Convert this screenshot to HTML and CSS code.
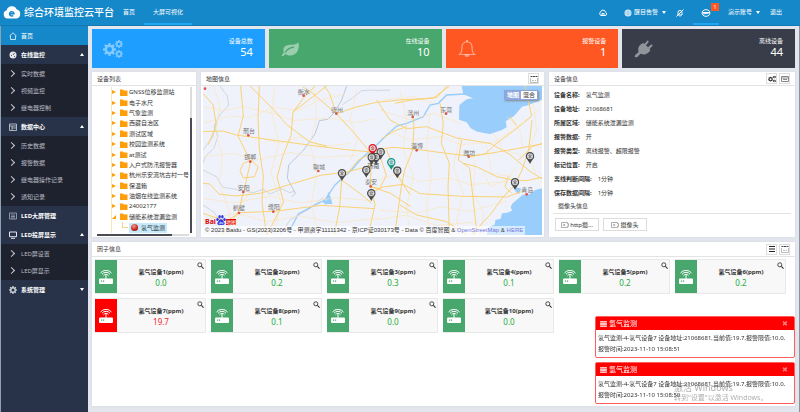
FILE: index.html
```html
<!DOCTYPE html>
<html lang="zh-CN">
<head>
    <meta charset="UTF-8">
    <title>综合环境监控云平台</title>
    <link rel="stylesheet" href="styles.css">
</head>
<body>

    <!-- Shared icons -->
    <svg class="defs" aria-hidden="true">
        <symbol id="gear" viewBox="0 0 16 16">
            <path fill-rule="evenodd" d="M6.8 0h2.4l.4 2.2 1.3.6L12.800 1.500l1.700 1.700-1.300 1.900.6 1.300 2.200.4v2.400l-2.200.4-.6 1.300 1.300 1.900-1.700 1.700-1.900-1.300-1.300.6-.4 2.200H6.800l-.4-2.200-1.300-.6-1.900 1.300-1.700-1.700 1.300-1.900-.6-1.300L0 9.200V6.800l2.200-.4.6-1.300-1.300-1.900 1.700-1.700 1.900 1.300 1.300-.6zM8 5a3 3 0 1 0 0 6 3 3 0 0 0 0-6z"/>
        </symbol>
        <symbol id="gears" viewBox="0 0 20 18">
            <use href="#gear" x="0" y="3" width="13" height="13"/>
            <use href="#gear" x="12" y="0" width="8" height="8"/>
            <use href="#gear" x="12" y="10" width="8" height="8"/>
        </symbol>
        <symbol id="folder" viewBox="0 0 8 7">
            <path d="M0 .5h3l.8 1H7.500V7H0z"/>
        </symbol>
        <symbol id="router" viewBox="0 0 14 14">
            <rect x="0" y="8.500" width="14" height="5.500" rx="1"/>
            <path d="M6.500 5h1v4h-1z"/>
            <g fill="none" stroke="#fff">
                <path d="M4.500 5.700a3 3 0 0 1 5 0"/>
                <path d="M3 4.300a5 5 0 0 1 8 0"/>
                <path d="M1.500 3a7 7 0 0 1 11 0"/>
            </g>
            <path class="leds" d="M2 10.500h1.200v1.200H2zM4 10.500h1.200v1.200H4z"/>
        </symbol>
        <symbol id="search" viewBox="0 0 8 8">
            <path d="M5 5l2.500 2.500" fill="none" stroke="#333" stroke-width="1.200"/>
            <circle cx="3.200" cy="3.200" r="2.300" fill="none" stroke="#333"/>
        </symbol>
        <symbol id="grid" viewBox="0 0 8 8">
            <path d="M.5 1.500h7" fill="none" stroke="#444" stroke-dasharray="2 .5"/>
            <path d="M.5 3v4.500h7V3M2 5.500h2M5 5.500h1" fill="none" stroke="#bbb"/>
        </symbol>
        <symbol id="camera" viewBox="0 0 8 8">
            <path d="M.5 1.500h6v1.500l1-.5v3l-1-.5v1.500h-6z" fill="none" stroke="#999" stroke-width=".8"/>
            <path d="M2.500 2.800l2 1.200-2 1.200z" fill="#888"/>
        </symbol>
        <symbol id="pin" viewBox="0 0 26 36">
            <path d="M13 0a13 13 0 0 1 13 13c0 7-8 12-13 23C8 25 0 20 0 13A13 13 0 0 1 13 0z"/>
            <circle cx="13" cy="13" r="9" fill="#d8d8d8"/>
            <path d="M8 11a7 7 0 0 1 10 0M10 14a4 4 0 0 1 6 0M9 17h8" fill="none" stroke="currentColor" stroke-width="2"/>
        </symbol>
    </svg>

    <header class="topbar">
        <svg class="logo" viewBox="0 0 18 13">
            <path fill="#fff" d="M4.500 12.500a4.200 4.200 0 0 1-.8-8.200 5.300 5.300 0 0 1 10-.8 4.600 4.600 0 0 1-.2 9z"/>
            <path fill="none" stroke="#1588c9" stroke-width="1.500" d="M6.800 7.700h4.200a2.200 2.200 0 1 0-.7 1.800"/>
        </svg>
        <h1>综合环境监控云平台</h1>
        <nav>
            <a href="#">首页</a>
            <a href="#" class="active">大屏可视化</a>
        </nav>
        <nav class="tools">
            <a href="#" class="tool" aria-label="云">
                <svg viewBox="0 0 8 8"><path d="M2 6.500a2 2 0 0 1-.4-3.500 2.500 2.500 0 0 1 4.900.2A1.700 1.700 0 0 1 6 6.500zM3 6V4.500h2V6" fill="none" stroke="#fff"/></svg>
            </a>
            <a href="#" class="tool alert">
                <svg viewBox="0 0 8 8"><circle cx="4" cy="4" r="3.500" fill="#d5ebf8"/><path d="M1 3h6M1 5h6M4 1v6" stroke="#6cb3dd" stroke-width=".5"/></svg>
                醒目告警<i class="caret down"></i>
            </a>
            <a href="#" class="tool mute" aria-label="静音">
                <svg viewBox="0 0 8 8"><path d="M2 6V3.500a2 2 0 0 1 4 0V6H1.500M3.500 7.200h1M7.500.5l-7 7" fill="none" stroke="#fff"/></svg>
            </a>
            <a href="#" class="tool message active" aria-label="消息">
                <svg viewBox="0 0 10 8"><path d="M5 .7c5.200 0 5.200 6.600 0 6.600S-.2.700 5 .7zM1.500 3.500h7M2 5l6-1" fill="none" stroke="#fff"/></svg>
                <span class="badge">1</span>
            </a>
            <a href="#" class="tool account">演示账号<i class="caret down"></i></a>
            <a href="#" class="tool">退出</a>
        </nav>
    </header>

    <div class="layout">
        <aside class="sidebar">
            <a href="#" class="item current">
                <svg viewBox="0 0 8 8"><path d="M.5 4L4 .8 7.500 4M1.500 3.500v4h5v-4" fill="none" stroke="#bfe0f3"/></svg>首页
            </a>
            <a href="#" class="item">
                <svg viewBox="0 0 8 8"><circle cx="4" cy="4" r="3.500" fill="#e4e6ea"/><path d="M4 4l1.500-2M2 4.500h1M5 5.500h1" stroke="#666"/></svg>在线监控<i class="caret up"></i>
            </a>
            <div class="submenu">
                <a href="#">实时数据</a>
                <a href="#">视频监控</a>
                <a href="#">继电器控制</a>
            </div>
            <a href="#" class="item">
                <svg viewBox="0 0 8 8"><path d="M.5 1h7v6.500h-7zM.5 3h7M3 5h4.500M3 3v4" fill="none" stroke="#d0d3da" stroke-width=".8"/></svg>数据中心<i class="caret up"></i>
            </a>
            <div class="submenu">
                <a href="#">历史数据</a>
                <a href="#">报警数据</a>
                <a href="#">继电器操作记录</a>
                <a href="#">通知记录</a>
            </div>
            <a href="#" class="item">
                <svg viewBox="0 0 8 8"><path d="M.5 1h7v6h-7zM2 3h4M2 4.500h4M2 6h4" fill="none" stroke="#a5abb8" stroke-width=".8"/></svg>LED大屏管理
            </a>
            <a href="#" class="item">
                <svg viewBox="0 0 8 8"><path d="M.5 1h7v4.700h-7zM2 7.300h4" fill="none" stroke="#e4e6ea"/></svg>LED投屏显示<i class="caret up"></i>
            </a>
            <div class="submenu">
                <a href="#">LED屏设置</a>
                <a href="#">LED屏显示</a>
            </div>
            <a href="#" class="item">
                <svg viewBox="0 0 8 8" fill="#c8ccd4"><use href="#gear"/></svg>系统管理<i class="caret down"></i>
            </a>
        </aside>

        <main>
            <section class="stats">
                <div class="stat blue">
                    <svg viewBox="0 0 20 18"><use href="#gears"/></svg>
                    <p>设备总数<b>54</b></p>
                </div>
                <div class="stat green">
                    <svg viewBox="0 0 20 18"><path d="M18.500 2.500c1.500 7-2 13-8.500 13-2 0-3.700-.8-4.800-1.600L3 16.500l-1.500-1 2.300-3C2 6 7 5 11 4.800c3 0 5.500-.5 7.500-2.300z"/><path d="M5 12.500c2.500-3.500 5-5 9-5.300" fill="none" stroke="#48a76c" stroke-width="1.200"/></svg>
                    <p>在线设备<b>10</b></p>
                </div>
                <div class="stat orange">
                    <svg viewBox="0 0 20 18"><path d="M2.500 14.500c2-1.500 2.500-4 2.500-7.500 0-3 2-5 5-5s5 2 5 5c0 3.500.5 6 2.500 7.500z" fill="none" stroke="#ffa488" stroke-width="1.200"/><path d="M9 0h2v2H9zM7.500 14.500h5a2.500 2.500 0 0 1-5 0z"/></svg>
                    <p>报警设备<b>1</b></p>
                </div>
                <div class="stat dark">
                    <svg viewBox="0 0 20 18"><path d="M14.500.5c1.300 0 1.500 1 .8 2L13 5.300l2 2 3-2.700c1.300-.6 2 .6 1.300 1.500L16.500 9l1 1c-2.500 4-6 5.500-9.500 3.700-1.800.3-2.300 3.300-5 3.800L1.500 16.500c.5-2.500 3.800-3 4-5C4.500 8 6 4.800 10.300 3l1 1z"/></svg>
                    <p>离线设备<b>44</b></p>
                </div>
            </section>

            <section class="middle">
                <div class="panel devices">
                    <h2>设备列表</h2>
                    <div class="tree-box">
                        <ul class="tree">
                            <li><svg><use href="#folder"/></svg>GNSS位移监测站</li>
                            <li><svg><use href="#folder"/></svg>电子水尺</li>
                            <li><svg><use href="#folder"/></svg>气象监测</li>
                            <li><svg><use href="#folder"/></svg>西藏自治区</li>
                            <li><svg><use href="#folder"/></svg>测试区域</li>
                            <li><svg><use href="#folder"/></svg>校园监测系统</li>
                            <li><svg><use href="#folder"/></svg>at测试</li>
                            <li><svg><use href="#folder"/></svg>入户式防汛报警器</li>
                            <li><svg><use href="#folder"/></svg>杭州乐安流坑古村一号</li>
                            <li><svg><use href="#folder"/></svg>保温箱</li>
                            <li><svg><use href="#folder"/></svg>油烟在线监测系统</li>
                            <li><svg><use href="#folder"/></svg>24002177</li>
                            <li class="open"><svg><use href="#folder"/></svg>储能系统泄漏监测</li>
                            <li class="leaf"><a href="#"><i class="ball"></i>氢气监测</a></li>
                        </ul>
                        <div class="vbar"></div>
                    </div>
                    <div class="hbar"></div>
                </div>

                <div class="panel map-panel">
                    <h2>地图信息<button aria-label="全屏"><svg><use href="#grid"/></svg></button></h2>
                    <div class="map">
                        <svg class="map-canvas" viewBox="9 48 1017 447" preserveAspectRatio="xMidYMid slice">
                            <rect x="9" y="48" width="1017" height="447" fill="#eff2fa"/>
                            <!-- sea, river and lakes -->
                            <g fill="#99cdfb">
                                <path d="M785 48l5 25 30 12-20 3-22 17-1 44 23 8 12 18 20 10 38 7 36-12 14-8-3-18 25-16 24-28 20-5 20-8 20-8V48z"/>
                                <path d="M1026 355l-20 5-16 12-22 2-10 9-20 17-6 10 4 12-14 6-16 2-4 16-16 4-2 14-16 6-8 25h166zM945 350l18 6-6 16-10-6z"/>
                                <path d="M385 365l8 20 4 18-20-2zM372 385l8 12-2 8-10-10z"/>
                            </g>
                            <path class="river" d="M820 82l-25-10-55 3-25 25-25 5-20 35-50 20-30 8-30 27-30 30-45 40-30 35-50 45-30 45-40 20-40 22-25 48"/>
                            <path class="river pale" d="M440 48l-15 42-22 38-20 20-25 4-12 38-35 50-45 45-4 40 24 45-10 10"/>
                            <!-- province borders -->
                            <g class="border">
                                <path d="M60 48l22 30 4 28-26 28-18 34 12 30-12 36-26 26-7 20M9 300l40 20 20 32 40 6 50 10 30-10 22 14 34-16 24 12 14-4M525 60l-40 2-28 22-30 20M525 62l45-2"/>
                                <path d="M9 405l34 22 18 30-14 38M240 495l30-45 60-34 40-34M9 240l30-40 8-40"/>
                            </g>
                            <!-- minor roads -->
                            <g class="minor">
                                <path d="M9 110l60 12 60-12 90 20 62 22 100-8 90 14 55-12M9 160l80-22 60 4 76-30 70 10 60-30 80-20M40 48l20 60-12 80 20 70-10 80 30 90-4 67"/>
                                <path d="M225 48l-10 80 22 90-24 90 30 90-22 97M9 260l90-10 70 20 100-22 90 14 110-6M9 385l90 14 110-20 90 20 110-16 116 10M340 48l10 90-20 80 20 90-16 90 20 97M470 60l-20 90 22 60-20 60"/>
                                <path d="M100 495l20-90 50-60M170 200l70 20 60-20 70 30 80-10M9 450l100-20 90 24 100-16 110 20 130-14M540 120l90 30 70-20 80 30M550 90l90-10 60 20M560 180l70 30 90-10 60 24 100-6 60-40 80-60"/>
                                <path d="M600 60l20 90-10 90 30 80-20 90 10 85M690 130l-10 100 14 90-14 90 10 85M780 200l-20 90 30 80-20 80 10 45M540 420l110 10 70-20 90 14 110-30M850 300l20 50 50-20 30-40M860 230l14 80 60 10M920 140l40 40 10 60M880 190l30 50 70 20M530 330l70-20 60 24 90-10 60 20 110-10M1000 100l10 80-24 70 20 60M520 450l100-14 90 30 120-10M825 270l-4 100 30 60-10 65"/>
                            </g>
                            <!-- main roads -->
                            <g class="major">
                                <path d="M122 48l8 90-16 60 38 76-16 70-20 80-50 71M178 48l-4 100 4 90 12 80-4 80 14 97M150 48l70 70 40 46 70 52 50 12M280 125l100-77M9 185l60-2 40 12 100 14 130 18 100 12 86 8M9 70l30 34 10 60-24 60M9 340l20 2 28 30 50 6 74-8 100-30 80-24 80-10 60-16 40-30"/>
                                <path d="M345 48l-36 38-30 40-6 70-24 60-18 66 20 74-50 99M409 131l-70-60-30-20M409 131l50 54 50 60M409 131l-20-60-16-23M409 131l60-20 60-14 80-8 90-4 50-37M425 330l50-60 40-20M425 330l-6 80-16 85M425 330l60 44 30 26M130 280l24-10 20 20-10 30-34 4-10-22zM9 430l70 24 40-26 104-4 140-18 160 10M515 245l-4 100 14 60-20 90M505 250l34 6 20 60-20 40-26-6"/>
                                <path d="M520 240l60-8 70 6 90 12 70 8 60-8 80-14 76-14M585 100l50-10 76-8 30-34M638 130l4 40-4 70-24 60-10 50-20 145M720 100l10 60-6 60 24 60-4 70 4 145M530 90l40 60 50 26 60-6 90 34 100 16 60 34 60 50 60 38"/>
                                <path d="M785 210l-10 60 34 24 20 180-8 21M790 280l40 10 60 30 50 10 40 2 46-10M975 48l20 90-30 26-80 60-30 28-44 8M930 140l20 26M996 150l-10 90-20 60-24 50M520 365l30-14 60-8 50 28 130 8 130 2 50-18M560 240l24 60 26 44 20 30M545 206l40-24 36-12M600 405l50 30 90 20 60 40M940 350l-30 30-36 50-60 65M925 320l-10 30 20 20M1026 220l-30 10-40 40M512 350l60 20 60 40"/>
                            </g>
                            <!-- cities -->
                            <g class="cities">
                                <circle cx="15" cy="56" r="4"/>
                                <circle cx="311" cy="77" r="4"/><text x="311" y="71">衡水</text>
                                <circle cx="409" cy="131" r="4"/><text x="411" y="126">德州</text>
                                <circle cx="145" cy="196" r="4"/><text x="147" y="190">邢台</text>
                                <circle cx="151" cy="275" r="4"/><text x="151" y="268">邯郸</text>
                                <circle cx="355" cy="303" r="4"/><text x="357" y="298">聊城</text>
                                <circle cx="130" cy="366" r="4"/><text x="131" y="361">安阳</text>
                                <circle cx="117" cy="429" r="4"/><text x="117" y="421">鹤壁</text>
                                <circle cx="220" cy="425" r="4"/><text x="221" y="418">濮阳</text>
                                <circle cx="512" cy="349" r="4"/><text x="513" y="343">泰安</text>
                                <circle cx="638" cy="141" r="4"/><text x="640" y="134">滨州</text>
                                <circle cx="738" cy="131" r="4"/><text x="739" y="125">东营</text>
                                <circle cx="650" cy="241" r="4"/><text x="651" y="235">淄博</text>
                                <circle cx="806" cy="260" r="4"/><text x="808" y="255">潍坊</text>
                                <circle cx="980" cy="373" r="4"/><text x="982" y="366">青岛</text>
                                <text class="capital" x="520" y="293">济南</text>
                            </g>
                            <!-- device markers -->
                            <g class="pins">
                                <use href="#pin" x="413" y="297" width="26" height="36"/>
                                <use href="#pin" x="529" y="233" width="26" height="36"/>
                                <use href="#pin" x="515" y="248" width="26" height="36"/>
                                <use href="#pin" x="486" y="287" width="26" height="36"/>
                                <use href="#pin" x="501" y="357" width="26" height="36"/>
                                <use href="#pin" class="red" x="505" y="222" width="26" height="36"/>
                                <use href="#pin" x="502" y="249" width="26" height="36"/>
                                <use href="#pin" class="teal" x="561" y="264" width="26" height="36"/>
                                <use href="#pin" x="579" y="289" width="26" height="36"/>
                                <use href="#pin" x="977" y="246" width="26" height="36"/>
                                <use href="#pin" x="932" y="324" width="26" height="36"/>
                            </g>
                        </svg>
                        <div class="map-type">
                            <button class="on">地图</button><button>混合</button>
                        </div>
                        <div class="baidu">
                            <b>Bai</b>
                            <svg viewBox="0 0 10 10" fill="#2932e1"><ellipse cx="1.500" cy="4.500" rx="1.200" ry="1.600"/><ellipse cx="3.600" cy="1.800" rx="1.200" ry="1.700"/><ellipse cx="6.400" cy="1.800" rx="1.200" ry="1.700"/><ellipse cx="8.500" cy="4.500" rx="1.200" ry="1.600"/><path d="M5 4.200c1.800 0 2 2 3.200 3 1.200 1.300.2 2.800-1.500 2.800H3.300C1.600 10 .6 8.500 1.800 7.200 3 6.200 3.200 4.200 5 4.200z"/><path d="M4.500 6.500v2.300H3.300V7.500M5.700 7v1.800H7V7" fill="none" stroke="#fff" stroke-width=".6"/></svg>
                            <span>地图</span>
                        </div>
                        <p class="copyright">© 2023 Baidu - GS(2023)3206号 - 甲测资字11111342 - 京ICP证030173号 - Data © 百度智图 &amp; <a href="#">OpenStreetMap</a> &amp; <a href="#">HERE</a></p>
                    </div>
                </div>

                <div class="panel info">
                    <h2>设备信息
                        <button aria-label="设置"><svg viewBox="0 0 20 18" fill="#333"><use href="#gears"/></svg></button>
                        <button aria-label="列表"><svg viewBox="0 0 8 8"><path d="M.5 1.500h7v5h-7zM.5 3h7M2 4.500h4" fill="none" stroke="#888"/></svg></button>
                    </h2>
                    <dl>
                        <div><dt>设备名称:</dt><dd>氢气监测</dd></div>
                        <div><dt>设备地址:</dt><dd>21068681</dd></div>
                        <div><dt>所属区域:</dt><dd>储能系统泄漏监测</dd></div>
                        <div><dt>报警数据:</dt><dd>开</dd></div>
                        <div><dt>报警类型:</dt><dd>离线报警、超限报警</dd></div>
                        <div><dt>标记位置:</dt><dd>开启</dd></div>
                        <div><dt>离线判断间隔:</dt><dd>1分钟</dd></div>
                        <div><dt>保存数据间隔:</dt><dd>1分钟</dd></div>
                    </dl>
                    <h3>摄像头信息</h3>
                    <div class="cameras">
                        <button><svg><use href="#camera"/></svg>http摄...</button>
                        <button><svg><use href="#camera"/></svg>摄像头</button>
                    </div>
                </div>
            </section>

            <section class="panel factors">
                <h2>因子信息
                    <button aria-label="列表"><svg viewBox="0 0 8 8"><path d="M1 1.500h6M1 4h6M1 6.500h6" stroke="#222" stroke-width="1.200"/></svg></button>
                    <button aria-label="全屏"><svg><use href="#grid"/></svg></button>
                </h2>
                <div class="cards">
                    <div class="card"><span class="side"><svg><use href="#router"/></svg></span><p>氢气设备1(ppm)<b>0.0</b></p><button aria-label="查看"><svg><use href="#search"/></svg></button></div>
                    <div class="card"><span class="side"><svg><use href="#router"/></svg></span><p>氢气设备2(ppm)<b>0.2</b></p><button aria-label="查看"><svg><use href="#search"/></svg></button></div>
                    <div class="card"><span class="side"><svg><use href="#router"/></svg></span><p>氢气设备3(ppm)<b>0.3</b></p><button aria-label="查看"><svg><use href="#search"/></svg></button></div>
                    <div class="card"><span class="side"><svg><use href="#router"/></svg></span><p>氢气设备4(ppm)<b>0.1</b></p><button aria-label="查看"><svg><use href="#search"/></svg></button></div>
                    <div class="card"><span class="side"><svg><use href="#router"/></svg></span><p>氢气设备5(ppm)<b>0.2</b></p><button aria-label="查看"><svg><use href="#search"/></svg></button></div>
                    <div class="card"><span class="side"><svg><use href="#router"/></svg></span><p>氢气设备6(ppm)<b>0.2</b></p><button aria-label="查看"><svg><use href="#search"/></svg></button></div>
                    <div class="card over"><span class="side"><svg><use href="#router"/></svg></span><p>氢气设备7(ppm)<b>19.7</b></p><button aria-label="查看"><svg><use href="#search"/></svg></button></div>
                    <div class="card"><span class="side"><svg><use href="#router"/></svg></span><p>氢气设备8(ppm)<b>0.1</b></p><button aria-label="查看"><svg><use href="#search"/></svg></button></div>
                    <div class="card"><span class="side"><svg><use href="#router"/></svg></span><p>氢气设备9(ppm)<b>0.0</b></p><button aria-label="查看"><svg><use href="#search"/></svg></button></div>
                    <div class="card"><span class="side"><svg><use href="#router"/></svg></span><p>氢气设备10(ppm)<b>0.0</b></p><button aria-label="查看"><svg><use href="#search"/></svg></button></div>
                </div>
            </section>
        </main>
    </div>

    <!-- Alarm popups -->
    <div class="toasts">
        <div class="toast">
            <h4><svg viewBox="0 0 8 7"><path d="M0 1h8M0 3.500h8M0 6h8" stroke="#fff" stroke-width="1.600"/></svg>氢气监测<button aria-label="关闭">✖</button></h4>
            <p>氢气监测-4-氢气设备7 设备地址:21068681,当前值:19.7,报警限值:10.0,报警时间:2023-11-10 15:08:51</p>
        </div>
        <div class="toast">
            <h4><svg viewBox="0 0 8 7"><path d="M0 1h8M0 3.500h8M0 6h8" stroke="#fff" stroke-width="1.600"/></svg>氢气监测<button aria-label="关闭">✖</button></h4>
            <p>氢气监测-4-氢气设备7 设备地址:21068681,当前值:19.7,报警限值:10.0,报警时间:2023-11-10 15:08:50</p>
        </div>
    </div>

    <div class="activate">
        <strong>激活 Windows</strong>
        转到"设置"以激活 Windows。
    </div>

</body>
</html>
```
FILE: styles.css
```css
* {
    box-sizing: border-box;
}
body {
    margin: 0;
    min-height: 100vh;
    display: flex;
    flex-direction: column;
    font-family: "Noto Sans", "Noto Sans CJK SC", sans-serif;
    font-size: 6px;
    line-height: 10px;
    color: #333;
    background-color: #e4e6ee;
}
h1, h2, h3, h4, p, ul, dl, dd {
    margin: 0;
    padding: 0;
}
a {
    color: inherit;
    text-decoration: none;
}
button {
    font: inherit;
    color: inherit;
    padding: 0;
    border: 0;
    background: none;
}
svg {
    display: block;
    flex: none;
}
.defs {
    position: absolute;
    width: 0;
    height: 0;
}

/* top bar */
.topbar {
    display: flex;
    align-items: center;
    height: 26px;
    padding: 0 9px 0 3px;
    color: #fff;
    background-color: #1588c9;
    border-bottom: 1px solid #1478b2;
}
.logo {
    width: 18px;
    height: 13px;
}
.topbar h1 {
    margin: 0 0 0 3px;
    font-size: 10px;
    font-weight: 500;
    line-height: 25px;
    white-space: nowrap;
}
.topbar nav {
    display: flex;
    height: 25px;
    line-height: 25px;
}
.topbar nav a {
    padding: 0 9px;
}
.topbar nav .active {
    border-bottom: 2px solid #1ea7f2;
}
.topbar .tools {
    margin-left: auto;
}
.topbar .tools .tool {
    display: flex;
    align-items: center;
    gap: 2px;
}
.tool svg {
    width: 8px;
    height: 8px;
}
.topbar .tools .alert {
    padding: 0 1px 0 8px;
}
.topbar .tools .account {
    padding-right: 1px;
}
.topbar .tools .message {
    position: relative;
    padding: 2px 8px 0 8px;
}
.topbar .tools .message svg {
    width: 10px;
}
.badge {
    position: absolute;
    top: 3px;
    right: 0;
    width: 8px;
    height: 8px;
    font-size: 5px;
    line-height: 8px;
    text-align: center;
    background-color: #ff5722;
}
.caret {
    margin-left: 2px;
    border: 2px solid transparent;
}
.caret.down {
    border-top: 3px solid #fff;
    border-bottom: 0;
}
.caret.up {
    border-bottom: 3px solid #fff;
    border-top: 0;
}

/* sidebar */
.layout {
    flex: 1;
    display: flex;
}
.sidebar {
    flex: none;
    width: 88px;
    border-left: 1px solid #8fa0b4;
    background-color: #28334a;
}
.item {
    display: flex;
    align-items: center;
    gap: 4px;
    height: 19px;
    padding: 0 4px 0 8px;
    color: #fff;
    font-weight: bold;
}
.item svg {
    width: 8px;
    height: 8px;
}
.item .caret {
    margin-left: auto;
}
.item.current {
    font-weight: normal;
    background-color: #1588c9;
}
.submenu {
    padding: 1px 0;
    background-color: #1e222e;
}
.submenu a {
    display: flex;
    align-items: center;
    gap: 7px;
    height: 17px;
    padding-left: 8px;
    color: #b9bcc4;
}
.submenu a::before {
    content: "";
    width: 4px;
    height: 4px;
    border-top: 1px solid #c9ccd2;
    border-right: 1px solid #c9ccd2;
    transform: rotate(45deg);
}

/* content */
main {
    flex: 1;
    min-width: 0;
    display: flex;
    flex-direction: column;
    gap: 4px;
    padding: 3px 4px 6px 4px;
    border-right: 1px solid #8a93a0;
}
.stats {
    display: grid;
    grid-template-columns: repeat(4, 1fr);
    gap: 4px;
}
.stat {
    display: flex;
    align-items: center;
    justify-content: space-between;
    height: 39px;
    padding: 0 12px 0 11px;
    color: #fff;
}
.stat svg {
    width: 20px;
    height: 18px;
    fill: #fff;
    fill-opacity: .45;
}
.stat p {
    padding-bottom: 3px;
    text-align: right;
    line-height: 8px;
}
.stat b {
    display: block;
    font-size: 11px;
    font-weight: normal;
    line-height: 13px;
}
.blue {
    background-color: #1e9fff;
}
.green {
    background-color: #48a76c;
}
.orange {
    background-color: #ff5722;
}
.dark {
    background-color: #393d49;
}
.panel {
    background-color: #fff;
    box-shadow: 0 0 2px #d5d7de;
}
.panel h2 {
    display: flex;
    align-items: center;
    gap: 2px;
    height: 14px;
    padding: 0 5px;
    font-size: 6px;
    font-weight: normal;
    border-bottom: 1px solid #e3e3e3;
}
.panel h2 button {
    display: flex;
    align-items: center;
    justify-content: center;
    width: 11px;
    height: 11px;
    border: 1px solid #ddd;
}
.panel h2 button:first-of-type {
    margin-left: auto;
}
.panel h2 svg {
    width: 8px;
    height: 8px;
}
.middle {
    display: grid;
    grid-template-columns: 104fr 343fr 246fr;
    gap: 5px;
}

/* device tree */
.devices {
    display: flex;
    flex-direction: column;
    min-width: 0;
}
.tree-box {
    flex: 1;
    display: flex;
    padding: 1px 4px 0 19px;
}
.tree {
    flex: 1;
    min-width: 0;
    display: flex;
    flex-direction: column;
    overflow: hidden;
    list-style: none;
    border-left: 1px solid #fde3b8;
}
.tree li {
    flex: 1;
    display: flex;
    align-items: center;
    gap: 1px;
    white-space: nowrap;
}
.tree li::before {
    content: "";
    margin-right: 3px;
    border: 2px solid transparent;
    border-left: 4px solid #ff9e0b;
    border-right: 0;
}
.tree .open::before {
    border: 0;
    border-left: 4px solid transparent;
    border-bottom: 4px solid #ff9e0b;
}
.tree .leaf::before {
    width: 5px;
    height: 5px;
    margin: 0 0 5px 10px;
    border: 0;
    border-left: 1px solid #fbd08c;
    border-bottom: 1px solid #fbd08c;
}
.tree svg {
    width: 8px;
    height: 7px;
    fill: #ff9e0b;
}
.leaf a {
    display: flex;
    align-items: center;
    gap: 3px;
    padding: 0 2px;
    background-color: #c4eafb;
}
.ball {
    width: 7px;
    height: 7px;
    border-radius: 50%;
    background: radial-gradient(circle at 40% 30%, #f0a090, #c8201a 60%, #7c1410);
}
.vbar {
    width: 2px;
    background: linear-gradient(#dcdce0 21%, #4a4c55 21%);
}
.hbar {
    height: 2px;
    margin: 1px 7px 1px 5px;
    background: linear-gradient(to right, #4a4c55 82%, #dcdce0 82%);
}

/* map */
.map {
    position: relative;
    margin: 0 2px 2px;
}
.map-canvas {
    width: 100%;
    height: 149px;
}
.river {
    fill: none;
    stroke: #99cdfb;
    stroke-width: 4;
}
.pale {
    stroke: #b9c9dc;
    stroke-width: 3;
}
.border {
    fill: none;
    stroke: #c3c7d0;
    stroke-width: 2;
}
.minor {
    fill: none;
    stroke: #fce6bd;
    stroke-width: 2;
}
.major {
    fill: none;
    stroke: #fbd274;
    stroke-width: 3;
    stroke-linejoin: round;
}
.cities {
    fill: #e0524c;
    font-size: 18px;
    text-anchor: middle;
}
.cities text {
    fill: #777;
}
.cities .capital {
    fill: #333;
}
.pins {
    fill: #4a4a4c;
    color: #4a4a4c;
}
.pins .red {
    fill: #e01020;
    color: #e01020;
}
.pins .teal {
    fill: #0c9c8c;
    color: #0c9c8c;
}
.map-type {
    position: absolute;
    top: 4px;
    right: 4px;
    display: flex;
    border: 1px solid #8ba4dc;
    box-shadow: 1px 1px 2px #888;
}
.map-type button {
    width: 16px;
    line-height: 8px;
    background-color: #fff;
}
.map-type .on {
    color: #fff;
    font-weight: bold;
    background-color: #8ea8e0;
}
.baidu {
    position: absolute;
    left: 2px;
    bottom: 10px;
    display: flex;
    align-items: flex-end;
    line-height: 6px;
}
.baidu b {
    font-size: 7px;
    line-height: 7px;
    color: #e10602;
}
.baidu svg {
    width: 10px;
    height: 10px;
}
.baidu span {
    font-size: 5px;
    color: #fff;
    background-color: #e10602;
}
.copyright {
    position: absolute;
    left: 0;
    bottom: 0;
    padding: 0 2px;
    font-family: "Liberation Sans", "Noto Sans CJK SC", sans-serif;
    line-height: 9px;
    white-space: nowrap;
    background-color: rgba(255, 255, 255, .6);
}
.copyright a {
    color: #7777dd;
}

/* device info */
.info dl {
    padding: 2px 5px 0;
}
.info dl div {
    display: flex;
    gap: 6px;
    line-height: 14px;
}
.info dt {
    font-weight: bold;
}
.info h3 {
    margin: 0 4px;
    padding-left: 5px;
    font-size: 6px;
    font-weight: normal;
    line-height: 13px;
    border-bottom: 1px solid #e3e3e3;
}
.cameras {
    display: flex;
    gap: 4px;
    padding: 4px 6px;
}
.cameras button {
    display: flex;
    align-items: center;
    justify-content: center;
    gap: 1px;
    width: 44px;
    height: 13px;
    border: 1px solid #ddd;
}
.cameras svg {
    width: 8px;
    height: 8px;
}

/* factor cards */
.factors {
    flex: 1;
    margin-top: 1px;
}
.factors h2 {
    height: 15px;
}
.cards {
    display: grid;
    grid-template-columns: repeat(6, 1fr);
    gap: 4px 5px;
    padding: 2px 9px 0 3px;
}
.card {
    position: relative;
    display: flex;
    height: 35px;
    background-color: #f8f8f8;
    border: 1px solid #e8e8e8;
    border-left: 0;
}
.side {
    display: flex;
    align-items: center;
    justify-content: center;
    width: 22px;
    background-color: #48a76c;
}
.side svg {
    width: 14px;
    height: 14px;
    fill: #fff;
}
.leds {
    fill: #48a76c;
}
.card p {
    flex: 1;
    padding-top: 7px;
    text-align: center;
    font-weight: bold;
}
.card b {
    display: block;
    font-size: 8px;
    font-weight: normal;
    line-height: 12px;
    color: #22ac38;
}
.card button {
    position: absolute;
    top: 2px;
    right: 1px;
}
.card button svg {
    width: 7px;
    height: 7px;
}
.over .side {
    background-color: #f00;
}
.over b {
    color: #f02828;
}

/* alarm popups */
.toasts {
    position: fixed;
    right: 5px;
    bottom: 8px;
    width: 200px;
    display: flex;
    flex-direction: column;
    gap: 4px;
}
.toast {
    background-color: #fff;
    border: 1px solid #ff5c5c;
    border-radius: 2px;
}
.toast h4 {
    display: flex;
    align-items: center;
    gap: 2px;
    height: 13px;
    padding: 0 6px 0 4px;
    font-size: 7px;
    font-weight: normal;
    color: #fff;
    background-color: #f00;
}
.toast h4 svg {
    width: 7px;
    height: 6px;
}
.toast h4 button {
    margin-left: auto;
    color: #ff8080;
}
.toast p {
    padding: 3px 5px 2px 2px;
    line-height: 11px;
}
.activate {
    position: fixed;
    right: 39px;
    bottom: 9px;
    width: 87px;
    font-size: 7px;
    line-height: 10px;
    white-space: nowrap;
    color: rgba(120, 120, 120, .6);
}
.activate strong {
    display: block;
    font-size: 9px;
    font-weight: normal;
}
```
